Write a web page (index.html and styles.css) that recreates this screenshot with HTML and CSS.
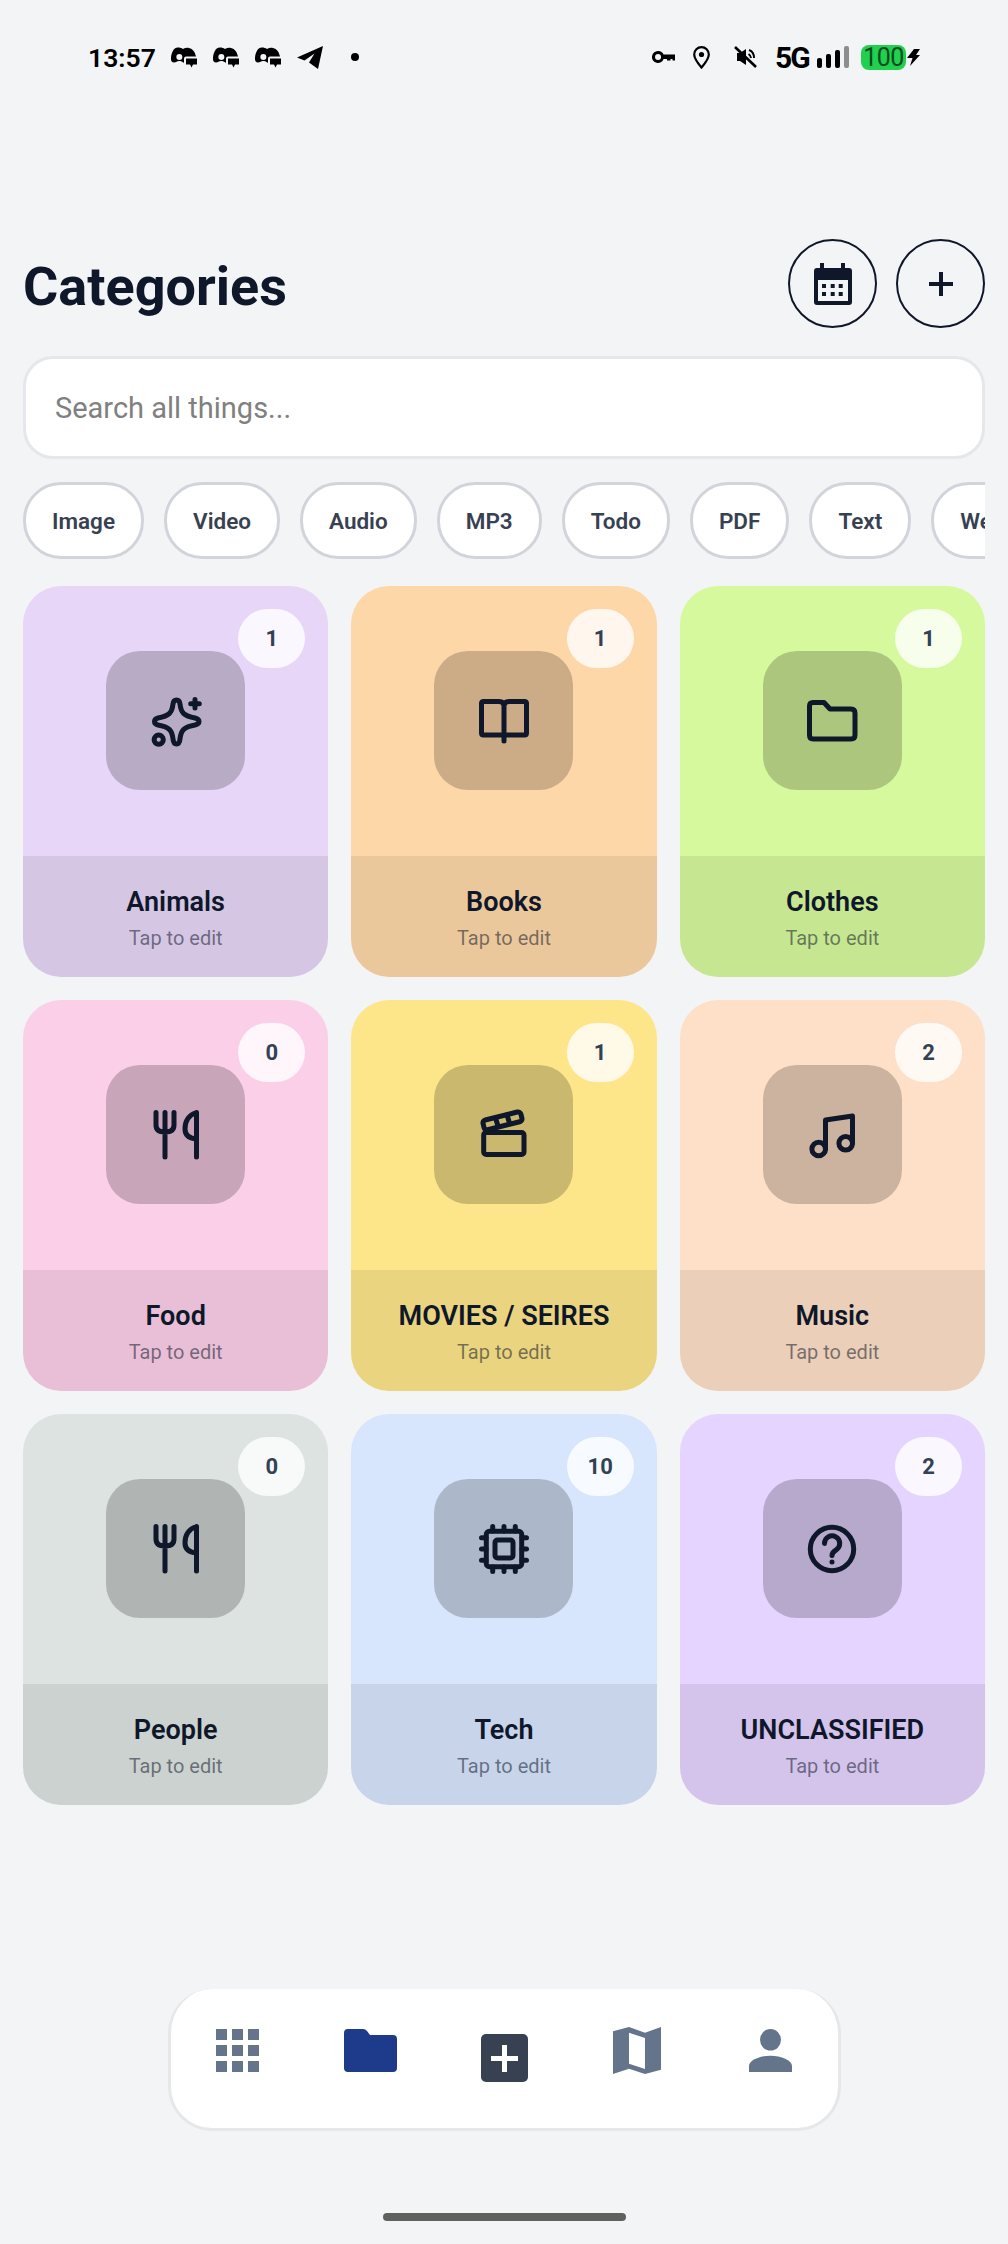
FILE: index.html
```html
<!DOCTYPE html>
<html lang="en">

<head>
    <meta charset="UTF-8">
    <meta name="viewport" content="width=device-width, initial-scale=1.0">
    <title>Categories</title>
    <link rel="stylesheet" href="styles.css">
</head>

<body>
    <svg class="defs" width="0" height="0">
        <symbol id="i-app" viewBox="0 0 26 21">
            <path fill-rule="evenodd" d="M7 .5C9 .5 10.500 1 12 2C14 .8 16 .3 18 1C22 2 24 5 25 9.500H15Q13 9.500 13 11.500V16C11 14.500 10 14 8 14C6 14 5 15.500 3 15.500C1 15.500 0 14 0 12C0 7 2 .5 7 .5ZM8.300 7A3 3 0 1 0 8.400 13A3 3 0 1 0 8.300 7Z"/>
            <path d="M15 11.500H26V17.500H22L20.500 20.500L19 17.500H15Z"/>
        </symbol>
        <symbol id="i-sparkle" viewBox="0 0 60 60">
            <path d="M30.5 9Q33.5 9 34 13C35 22 38 25 49 27Q53 28 53 30.5Q53 33 49 34C38 36 35 39 34 48Q33.5 53 30.5 53Q27.5 53 27 48C26 39 23 36 12 34Q8.5 33 8.5 30.5Q8.5 28 12 27C23 25 26 22 27 13Q27.5 9 30.5 9Z"/>
            <path d="M49 8.5V17M44.7 12.7H53.3"/>
            <circle cx="12.7" cy="48.7" r="4.6"/>
        </symbol>
        <symbol id="i-book" viewBox="0 0 60 60">
            <path d="M30 15Q30 10.5 25 10.5H9.5Q7.5 10.5 7.5 12.5V42Q7.5 44 9.5 44H50.5Q52.5 44 52.5 42V12.5Q52.5 10.5 50.5 10.5H35Q30 10.5 30 15V50"/>
        </symbol>
        <symbol id="i-folder" viewBox="0 0 60 60">
            <path d="M11 11.5H22L28 18H49Q53 18 53 22V44Q53 48 49 48H11Q7.5 48 7.5 44V15Q7.5 11.5 11 11.5Z"/>
        </symbol>
        <symbol id="i-food" viewBox="0 0 60 60">
            <path d="M10 7.5V20Q10 27 19 27Q28 27 28 20V7.5M19 7.5V52"/>
            <path d="M50.5 7.5C43 10 39 16 39 24Q39 33 50.5 34M50.5 7.5V52"/>
        </symbol>
        <symbol id="i-movie" viewBox="0 0 60 60">
            <rect x="9.7" y="27.5" width="40.3" height="22" rx="2.5"/>
            <rect x="9" y="11" width="39" height="10" rx="3" transform="rotate(-14 28 16)"/>
            <path d="M21.5 13L24 21M33 10L35.5 18"/>
        </symbol>
        <symbol id="i-music" viewBox="0 0 60 60">
            <circle cx="16.7" cy="44" r="6.8"/>
            <circle cx="43.7" cy="38.3" r="6.8"/>
            <path d="M23.5 44V15L50.5 11V38"/>
        </symbol>
        <symbol id="i-cpu" viewBox="0 0 60 60">
            <rect x="12.3" y="12.3" width="35.4" height="35.4" rx="3"/>
            <rect x="21" y="21" width="18" height="18" rx="2.5"/>
            <path d="M18.7 7.5V12M30 7.5V12M41.3 7.5V12M18.7 48V52.5M30 48V52.5M41.3 48V52.5M7.5 18.7H12M7.5 30H12M7.5 41.3H12M48 18.7H52.5M48 30H52.5M48 41.3H52.5"/>
        </symbol>
        <symbol id="i-help" viewBox="0 0 60 60">
            <circle cx="30" cy="30" r="21.7"/>
            <path d="M22.5 24.5A7.6 7.6 0 1 1 34 31C31.5 32.5 30 34 30 36.5M30 43V43.1"/>
        </symbol>
    </svg>

    <div class="status-bar">
        <div class="status-left">
            <span class="time">13:57</span>
            <svg class="st-app"><use href="#i-app"/></svg>
            <svg class="st-app"><use href="#i-app"/></svg>
            <svg class="st-app"><use href="#i-app"/></svg>
            <svg class="st-plane" viewBox="0 0 26 23"><path d="M26 0L21 23L12 16.5L17.5 7.5L7.5 14.5L0 11.5Z"/></svg>
            <span class="st-dot"></span>
        </div>
        <div class="status-right">
            <svg class="st-key" viewBox="0 0 23 13"><path fill-rule="evenodd" d="M6 0A6 6 0 0 1 11.600 3.500H23V9.500H20.500V8H18.500V9.500H15V8H11.600A6 6 0 1 1 6 0ZM6 3A3 3 0 1 0 6.100 9A3 3 0 1 0 6 3Z"/></svg>
            <svg class="st-pin" viewBox="0 0 17 23"><path fill="none" stroke="#000" stroke-width="2.200" d="M8.500 1.200A7.300 7.300 0 0 1 15.800 8.500C15.800 13 11.500 18 8.500 21.500C5.500 18 1.200 13 1.200 8.500A7.300 7.300 0 0 1 8.500 1.200Z"/><circle cx="8.500" cy="8.500" r="2.600"/></svg>
            <svg class="st-mute" viewBox="0 0 23 22"><path d="M3 7H6L12 3V19L6 15H3Z"/><path fill="none" stroke="#000" stroke-width="2" d="M15 4C18 5 20 8 20 12M14.500 8C16 9 17 10 17 12"/><path stroke="#000" stroke-width="2.600" d="M1 1L22 21"/></svg>
            <span class="st-net">5G</span>
            <div class="st-signal">
                <span class="bar bar-1"></span>
                <span class="bar bar-2"></span>
                <span class="bar bar-3"></span>
                <span class="bar bar-4"></span>
            </div>
            <span class="st-battery">100</span>
            <svg class="st-bolt" viewBox="0 0 14 17"><path d="M8 0H14L10 6H14L4 17L6.500 9H1Z"/></svg>
        </div>
    </div>

    <div class="content">
        <div class="header">
            <h1 class="title">Categories</h1>
            <div class="round-btn btn-calendar">
                <svg width="38" height="42" viewBox="0 0 38 42"><path fill-rule="evenodd" d="M6 0H10V5H27V0H31V5H35Q38 5 38 8V39Q38 42 35 42H3Q0 42 0 39V8Q0 5 3 5H6ZM4 17V38H34V17Z"/><path d="M8 21H12V25H8ZM16.700 21H20.700V25H16.700ZM24.700 21H28.700V25H24.700ZM8 29H12V33H8ZM16.700 29H20.700V33H16.700ZM24.700 29H28.700V33H24.700Z"/></svg>
            </div>
            <div class="round-btn btn-add">
                <svg width="24" height="24" viewBox="0 0 24 24"><path d="M10 0H14V10H24V14H14V24H10V14H0V10H10Z"/></svg>
            </div>
        </div>

        <div class="search">Search all things...</div>

        <div class="chips">
            <span class="chip">Image</span>
            <span class="chip">Video</span>
            <span class="chip">Audio</span>
            <span class="chip">MP3</span>
            <span class="chip">Todo</span>
            <span class="chip">PDF</span>
            <span class="chip">Text</span>
            <span class="chip">Web</span>
        </div>

        <div class="grid">
            <div class="card c-animals">
                <div class="card-top">
                    <span class="badge">1</span>
                    <div class="icon-box"><svg class="cat-icon"><use href="#i-sparkle"/></svg></div>
                </div>
                <div class="card-foot"><div class="name">Animals</div><div class="sub">Tap to edit</div></div>
            </div>
            <div class="card c-books">
                <div class="card-top">
                    <span class="badge">1</span>
                    <div class="icon-box"><svg class="cat-icon"><use href="#i-book"/></svg></div>
                </div>
                <div class="card-foot"><div class="name">Books</div><div class="sub">Tap to edit</div></div>
            </div>
            <div class="card c-clothes">
                <div class="card-top">
                    <span class="badge">1</span>
                    <div class="icon-box"><svg class="cat-icon"><use href="#i-folder"/></svg></div>
                </div>
                <div class="card-foot"><div class="name">Clothes</div><div class="sub">Tap to edit</div></div>
            </div>
            <div class="card c-food">
                <div class="card-top">
                    <span class="badge">0</span>
                    <div class="icon-box"><svg class="cat-icon"><use href="#i-food"/></svg></div>
                </div>
                <div class="card-foot"><div class="name">Food</div><div class="sub">Tap to edit</div></div>
            </div>
            <div class="card c-movies">
                <div class="card-top">
                    <span class="badge">1</span>
                    <div class="icon-box"><svg class="cat-icon"><use href="#i-movie"/></svg></div>
                </div>
                <div class="card-foot"><div class="name">MOVIES / SEIRES</div><div class="sub">Tap to edit</div></div>
            </div>
            <div class="card c-music">
                <div class="card-top">
                    <span class="badge">2</span>
                    <div class="icon-box"><svg class="cat-icon"><use href="#i-music"/></svg></div>
                </div>
                <div class="card-foot"><div class="name">Music</div><div class="sub">Tap to edit</div></div>
            </div>
            <div class="card c-people">
                <div class="card-top">
                    <span class="badge">0</span>
                    <div class="icon-box"><svg class="cat-icon"><use href="#i-food"/></svg></div>
                </div>
                <div class="card-foot"><div class="name">People</div><div class="sub">Tap to edit</div></div>
            </div>
            <div class="card c-tech">
                <div class="card-top">
                    <span class="badge">10</span>
                    <div class="icon-box"><svg class="cat-icon"><use href="#i-cpu"/></svg></div>
                </div>
                <div class="card-foot"><div class="name">Tech</div><div class="sub">Tap to edit</div></div>
            </div>
            <div class="card c-unclassified">
                <div class="card-top">
                    <span class="badge">2</span>
                    <div class="icon-box"><svg class="cat-icon"><use href="#i-help"/></svg></div>
                </div>
                <div class="card-foot"><div class="name">UNCLASSIFIED</div><div class="sub">Tap to edit</div></div>
            </div>
        </div>
    </div>

    <div class="bottom-nav">
        <div class="nav-item">
            <div class="dots">
                <span></span><span></span><span></span>
                <span></span><span></span><span></span>
                <span></span><span></span><span></span>
            </div>
        </div>
        <div class="nav-item">
            <svg class="nav-folder" width="53" height="43" viewBox="0 0 53 43"><path d="M4 0H19Q21.500 0 23 2L26 6H49Q53 6 53 10V39Q53 43 49 43H4Q0 43 0 39V4Q0 0 4 0Z"/></svg>
        </div>
        <div class="nav-item">
            <div class="nav-plus">
                <svg width="27" height="27" viewBox="0 0 27 27"><path d="M11 0H16V11H27V16H16V27H11V16H0V11H11Z"/></svg>
            </div>
        </div>
        <div class="nav-item">
            <svg class="nav-map" width="48" height="47" viewBox="0 0 48 47"><path fill-rule="evenodd" d="M0 4.300L16 0L32 5.700L48 0V42.700L32 47L16 41.700L0 47ZM16 5.700V36.700L32 42V11Z"/></svg>
        </div>
        <div class="nav-item">
            <svg class="nav-person" width="43" height="43" viewBox="0 0 43 43"><ellipse cx="21.500" cy="10.800" rx="10.500" ry="10.800"/><path d="M0 43V37C0 31 11 26.700 21.500 26.700C32 26.700 43 31 43 37V43Z"/></svg>
        </div>
    </div>

    <div class="home-bar"></div>
</body>

</html>
```

FILE: styles.css
```css
* {
    box-sizing: border-box;
}

body {
    margin: 0;
    width: 1008px;
    height: 2244px;
    overflow: hidden;
    display: flex;
    flex-direction: column;
    background: #f3f4f6;
    font-family: Roboto, "Liberation Sans", sans-serif;
    color: #0f172a;
}

.defs {
    position: absolute;
}

/* status bar */
.status-bar {
    height: 114px;
    flex-shrink: 0;
    display: flex;
    justify-content: space-between;
    align-items: center;
    padding: 0 88px;
    color: #000;
}

.status-left,
.status-right {
    display: flex;
    align-items: center;
}

.time {
    width: 64px;
    margin-right: 19px;
    font-size: 26.5px;
    font-weight: 600;
    white-space: nowrap;
}

.st-app {
    width: 26px;
    height: 21px;
    margin-right: 16px;
}

.st-plane {
    width: 26px;
    height: 23px;
}

.st-dot {
    width: 8px;
    height: 8px;
    margin-left: 28px;
    border-radius: 50%;
    background: #000;
}

.st-key {
    width: 23px;
    height: 13px;
    margin-right: 18px;
}

.st-pin {
    width: 17px;
    height: 23px;
    margin-right: 24px;
}

.st-mute {
    width: 23px;
    height: 22px;
    margin-right: 18px;
}

.st-net {
    width: 32px;
    margin-right: 10px;
    font-size: 30px;
    font-weight: 700;
    letter-spacing: -2px;
    white-space: nowrap;
}

.st-signal {
    width: 32px;
    height: 22px;
    margin-right: 12px;
    display: flex;
    justify-content: space-between;
    align-items: flex-end;
}

.bar {
    width: 5px;
    border-radius: 2px;
    background: #000;
}

.bar-1 { height: 10px; }
.bar-2 { height: 14px; }
.bar-3 { height: 18px; }
.bar-4 { height: 22px; background: #8d8d8d; }

.st-battery {
    width: 45px;
    height: 25px;
    border-radius: 8px;
    background: #1fd14f;
    color: #0b4a1c;
    font-size: 25px;
    letter-spacing: -.5px;
    line-height: 25px;
    text-align: center;
}

.st-bolt {
    width: 14px;
    height: 17px;
}

/* main */
.content {
    padding: 125px 23px 0;
}

.header {
    display: flex;
    align-items: center;
    gap: 19px;
}

.title {
    flex: 1;
    margin: 6px 0 0;
    font-size: 54px;
    font-weight: 700;
}

.round-btn {
    width: 89px;
    height: 89px;
    display: flex;
    align-items: center;
    justify-content: center;
    border: 2.5px solid #0f172a;
    border-radius: 50%;
}

.round-btn svg {
    fill: #0f172a;
}

.search {
    height: 103px;
    margin-top: 28px;
    padding-left: 29px;
    display: flex;
    align-items: center;
    background: #fff;
    border: 3px solid #e5e7eb;
    border-radius: 30px;
    color: #808080;
    font-size: 29px;
}

.chips {
    margin-top: 23px;
    display: flex;
    gap: 20px;
    overflow: hidden;
}

.chip {
    flex-shrink: 0;
    height: 77px;
    padding: 0 26px;
    display: flex;
    align-items: center;
    background: #fff;
    border: 3px solid #d1d5db;
    border-radius: 38px;
    color: #374151;
    font-size: 22.5px;
    font-weight: 600;
}

.grid {
    margin-top: 27px;
    display: grid;
    grid-template-columns: repeat(3, 1fr);
    gap: 23px;
}

.card {
    height: 391px;
    display: flex;
    flex-direction: column;
    border-radius: 38px;
    overflow: hidden;
}

.c-animals { background: #e7d6f7; }
.c-books { background: #fed7a9; }
.c-clothes { background: #d7f99d; }
.c-food { background: #fbcfe8; }
.c-movies { background: #fde68a; }
.c-music { background: #fee0c8; }
.c-people { background: #dde3e0; }
.c-tech { background: #d7e6fd; }
.c-unclassified { background: #e5d4ff; }

.card-top {
    flex: 1;
    position: relative;
    padding-top: 65px;
    display: flex;
    justify-content: center;
    align-items: flex-start;
}

.badge {
    position: absolute;
    top: 23px;
    right: 23px;
    width: 67px;
    height: 59px;
    border-radius: 30px;
    background: rgba(255, 255, 255, 0.8);
    color: #334155;
    font-size: 22px;
    font-weight: 700;
    line-height: 59px;
    text-align: center;
}

.icon-box {
    width: 139px;
    height: 139px;
    display: flex;
    align-items: center;
    justify-content: center;
    border-radius: 34px;
    background: rgba(0, 0, 0, 0.2);
}

.cat-icon {
    width: 60px;
    height: 60px;
    fill: none;
    stroke: #0f172a;
    stroke-width: 5;
    stroke-linecap: round;
    stroke-linejoin: round;
}

.card-foot {
    height: 121px;
    padding-top: 30px;
    background: rgba(0, 0, 0, 0.075);
    text-align: center;
}

.name {
    font-size: 27px;
    font-weight: 600;
    line-height: 32px;
    color: #0f172a;
}

.sub {
    margin-top: 8px;
    font-size: 20px;
    line-height: 24px;
    color: rgba(15, 23, 42, 0.55);
}

/* bottom nav */
.bottom-nav {
    width: 673px;
    height: 142px;
    margin: auto auto 0;
    padding-top: 40px;
    display: flex;
    align-items: flex-start;
    background: #fff;
    border: 3px solid #e5e7eb;
    border-top: 0;
    border-radius: 44px;
}

.nav-item {
    flex: 1;
    display: flex;
    justify-content: center;
}

.dots {
    width: 43px;
    display: grid;
    grid-template-columns: repeat(3, 11px);
    justify-content: space-between;
    gap: 5px;
}

.dots span {
    height: 11px;
    background: #64748b;
}

.nav-folder {
    fill: #1e3a8a;
}

.nav-plus {
    width: 47px;
    height: 48px;
    margin-top: 5px;
    display: flex;
    align-items: center;
    justify-content: center;
    border-radius: 5px;
    background: #374151;
}

.nav-plus svg {
    fill: #fff;
}

.nav-map {
    margin-top: -2px;
    fill: #64748b;
}

.nav-person {
    fill: #64748b;
}

.home-bar {
    width: 243px;
    height: 8px;
    margin: 82px auto 23px;
    flex-shrink: 0;
    border-radius: 4px;
    background: #5f615f;
}
```
